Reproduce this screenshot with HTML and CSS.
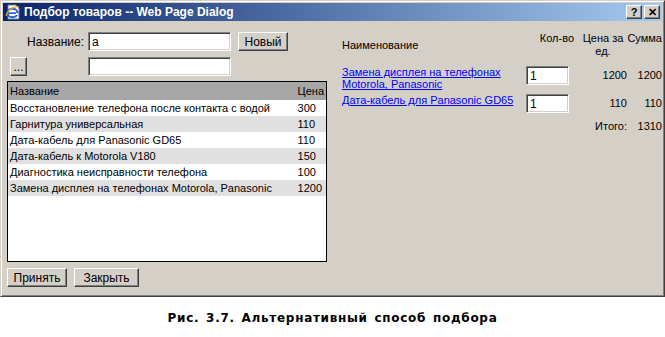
FILE: index.html
```html
<!DOCTYPE html>
<html lang="ru">
<head>
    <meta charset="UTF-8">
    <title>Подбор товаров</title>
    <link rel="stylesheet" href="styles.css">
</head>
<body>

<div class="window">
    <div class="titlebar">
        <svg class="app-icon" width="16" height="16" viewBox="0 0 16 16">
            <path d="M3 1 H11 L14 4 V15 H3 Z" fill="#fff" stroke="#7b7b7b" stroke-width="1"/>
            <ellipse cx="7.5" cy="9" rx="5" ry="4.2" fill="none" stroke="#1c5fd6" stroke-width="2"/>
            <rect x="3" y="8.3" width="9" height="1.6" fill="#1c5fd6"/>
            <path d="M11 10 L13 10" stroke="#fff" stroke-width="2"/>
            <path d="M1 12 C3 4 12 2 14 3" fill="none" stroke="#e6a21c" stroke-width="1.3"/>
        </svg>
        <span class="title">Подбор товаров -- Web Page Dialog</span>
        <div class="caption-buttons">
            <span class="cap-btn">?</span>
            <span class="cap-btn">✕</span>
        </div>
    </div>

    <div class="content">
        <div class="left-panel">
            <div class="search-row">
                <label class="search-label" for="nazv">Название:</label>
                <input class="field" type="text" id="nazv" value="a">
                <button class="btn btn-new">Новый</button>
            </div>
            <div class="search-row">
                <div class="search-label"><button class="btn btn-dots">...</button></div>
                <input class="field" type="text">
            </div>

            <div class="list-box">
                <table class="goods">
                    <thead>
                        <tr><th>Название</th><th class="price">Цена</th></tr>
                    </thead>
                    <tbody>
                        <tr><td>Восстановление телефона после контакта с водой</td><td class="price">300</td></tr>
                        <tr class="odd"><td>Гарнитура универсальная</td><td class="price">110</td></tr>
                        <tr><td>Дата-кабель для Panasonic GD65</td><td class="price">110</td></tr>
                        <tr class="odd"><td>Дата-кабель к Motorola V180</td><td class="price">150</td></tr>
                        <tr><td>Диагностика неисправности телефона</td><td class="price">100</td></tr>
                        <tr class="odd"><td>Замена дисплея на телефонах Motorola, Panasonic</td><td class="price">1200</td></tr>
                    </tbody>
                </table>
            </div>

            <div class="bottom-buttons">
                <button class="btn btn-ok">Принять</button>
                <button class="btn btn-close">Закрыть</button>
            </div>
        </div>

        <div class="right-panel">
            <table class="order">
                <thead>
                    <tr>
                        <th class="col-name">Наименование</th>
                        <th class="col-qty">Кол-во</th>
                        <th class="col-price">Цена за ед.</th>
                        <th class="col-sum">Сумма</th>
                    </tr>
                </thead>
                <tbody>
                    <tr>
                        <td><a href="#">Замена дисплея на телефонах Motorola, Panasonic</a></td>
                        <td class="col-qty"><input class="field qty" type="text" value="1"></td>
                        <td class="num">1200</td>
                        <td class="num">1200</td>
                    </tr>
                    <tr>
                        <td><a href="#">Дата-кабель для Panasonic GD65</a></td>
                        <td class="col-qty"><input class="field qty" type="text" value="1"></td>
                        <td class="num">110</td>
                        <td class="num">110</td>
                    </tr>
                    <tr class="total">
                        <td></td>
                        <td></td>
                        <td class="num">Итого:</td>
                        <td class="num">1310</td>
                    </tr>
                </tbody>
            </table>
        </div>
    </div>
</div>

<p class="figure-caption">Рис. 3.7. Альтернативный способ подбора</p>

</body>
</html>
```

FILE: styles.css
```css
body {
    margin: 0;
    background-color: #fff;
    font-family: "Liberation Sans", Arial, sans-serif;
    font-size: 11px;
    color: #000;
}

.window {
    width: 665px;
    height: 297px;
    box-sizing: border-box;
    background-color: #d4d0c8;
    border-top: 1px solid #d4d0c8;
    border-left: 1px solid #d4d0c8;
    border-right: 1px solid #404040;
    border-bottom: 1px solid #404040;
    box-shadow: inset 1px 1px #fff, inset -1px -1px #808080;
    padding: 2px;
}

.titlebar {
    height: 18px;
    display: flex;
    align-items: center;
    background: linear-gradient(to right, #0a246a, #a6caf0);
    color: #fff;
    padding-left: 2px;
}

.app-icon {
    margin-right: 3px;
}

.title {
    font-weight: bold;
    font-size: 12px;
    flex: 1;
}

.caption-buttons {
    display: flex;
    gap: 2px;
    margin-right: 2px;
}

.cap-btn {
    width: 16px;
    height: 14px;
    box-sizing: border-box;
    background-color: #d4d0c8;
    color: #000;
    font-weight: bold;
    font-size: 11px;
    line-height: 12px;
    text-align: center;
    border-top: 1px solid #fff;
    border-left: 1px solid #fff;
    border-right: 1px solid #404040;
    border-bottom: 1px solid #404040;
    box-shadow: inset -1px -1px #808080;
}

.content {
    display: flex;
    padding: 11px 0 0 4px;
}

.left-panel {
    width: 320px;
}

.search-row {
    display: flex;
    align-items: center;
    height: 19px;
    margin-bottom: 6px;
}

.search-label {
    width: 81px;
    text-align: right;
    padding-right: 4px;
    box-sizing: border-box;
    font-size: 12px;
}

.search-row .search-label:has(.btn-dots) {
    text-align: left;
    padding-left: 3px;
}

.field {
    width: 143px;
    height: 19px;
    box-sizing: border-box;
    padding: 0 3px;
    font-family: "Liberation Sans", Arial, sans-serif;
    font-size: 12px;
    background-color: #fff;
    border-top: 1px solid #808080;
    border-left: 1px solid #808080;
    border-right: 1px solid #fff;
    border-bottom: 1px solid #fff;
    box-shadow: inset 1px 1px #404040, inset -1px -1px #d4d0c8;
    outline: none;
}

.btn {
    height: 19px;
    box-sizing: border-box;
    padding: 0;
    font-family: "Liberation Sans", Arial, sans-serif;
    font-size: 12px;
    color: #000;
    background-color: #d4d0c8;
    border-top: 1px solid #fff;
    border-left: 1px solid #fff;
    border-right: 1px solid #404040;
    border-bottom: 1px solid #404040;
    box-shadow: inset -1px -1px #808080;
}

.btn-new {
    width: 50px;
    margin-left: 7px;
}

.btn-dots {
    width: 17px;
    text-align: center;
    line-height: 12px;
}

.list-box {
    height: 181px;
    box-sizing: border-box;
    border: 1px solid #000;
    background-color: #fff;
    margin-top: -1px;
}

.goods {
    width: 100%;
    border-collapse: collapse;
}

.goods th, .goods td {
    padding: 0 2px;
    height: 16px;
    text-align: left;
    font-weight: normal;
    white-space: nowrap;
}

.goods th {
    background-color: #a6a6a6;
    height: 18px;
}

.goods .price {
    width: 26px;
}

.goods tr.odd td {
    background-color: #e0e0e0;
}

.bottom-buttons {
    display: flex;
    gap: 7px;
    margin-top: 6px;
}

.btn-ok {
    width: 60px;
}

.btn-close {
    width: 65px;
}

.right-panel {
    margin-left: 15px;
    width: 320px;
}

.order {
    border-collapse: collapse;
    width: 320px;
}

.order th {
    font-weight: normal;
    padding: 0 0 8px 0;
    line-height: 13px;
    vertical-align: top;
}

.order .col-name {
    text-align: left;
    width: 184px;
}

.order th.col-name {
    vertical-align: middle;
}

.order .col-qty {
    width: 48px;
    text-align: left;
}

.order th.col-qty {
    text-align: right;
    padding-right: 5px;
}

.order .col-price {
    width: 48px;
}

.order th.col-price {
    text-align: center;
}

.order th.col-sum {
    text-align: right;
}

.order td {
    padding: 0 0 4px 0;
    vertical-align: top;
    line-height: 12px;
}

.order td.num {
    text-align: right;
    padding-top: 3px;
}

.order a {
    color: #0000ff;
    text-decoration: underline;
}

.field.qty {
    width: 43px;
    height: 19px;
}

.figure-caption {
    margin: 14px 0 0 0;
    text-align: center;
    font-family: "DejaVu Sans", Verdana, sans-serif;
    font-weight: bold;
    font-size: 12px;
    letter-spacing: 0.7px;
    word-spacing: 2px;
}
```
